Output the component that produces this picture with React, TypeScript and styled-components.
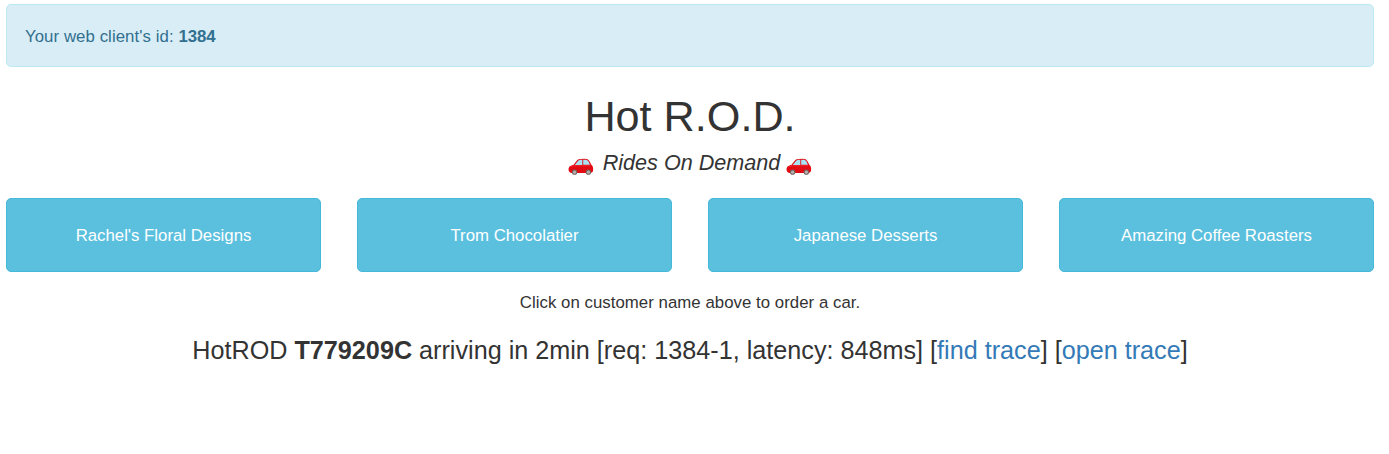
import React from 'react';
import styled, { createGlobalStyle } from 'styled-components';

const Global = createGlobalStyle`
  * { box-sizing: border-box; }
  body { margin: 0; background: #fff; color: #333; font: 16.8px/24px "Liberation Sans", Arial, sans-serif; overflow: hidden; }
`;
const Page = styled.main`padding: 4px 15px 0 6px;`;
const Alert = styled.div`
  height: 63px; padding: 20px 18px 18px; background: #d9edf7; border: 1px solid #bce8f1; border-radius: 5px; color: #31708f;
`;
const ClientLabel = styled.span`letter-spacing: 0.07px;`;
const Hero = styled.header`text-align: center;`;
const Title = styled.h1`margin: 24px 0 0; font-size: 43.2px; line-height: 50px; font-weight: 400;`;
const Tagline = styled.h4`
  margin: 8px 0 0; height: 28px; font-size: 21.6px; line-height: 28px; font-weight: 400;
  display: flex; justify-content: center; align-items: center;
`;
const Slogan = styled.em`margin: 0 5.5px 0 8.5px;`;
const Customers = styled.div`display: grid; grid-template-columns: repeat(4, 315px); justify-content: space-between; margin-top: 21px;`;
const CustomerButton = styled.button`
  height: 74px; padding: 1px 6px 0; border: 1px solid #46b8da; border-radius: 5px; background: #5bc0de; color: #fff; font: inherit;
`;
const Hint = styled.p`margin: 19px 0 0; text-align: center; letter-spacing: 0.04px;`;
const Trip = styled.div`margin-top: 18px; text-align: center; font-size: 25.2px; line-height: 34px; white-space: nowrap;`;
const Link = styled.a`color: #337ab7; text-decoration: none;`;
const CarSvg = styled.svg`display: block; width: 26px; height: 26px; margin-top: 4px;`;

const Car = () => (
  <CarSvg viewBox="0 0 26 26">
    <path d="M.6 18.6V16.2Q1 14.1 3.4 13.5L5.6 12.8 8.5 8.9Q9.5 7.1 12.3 6.9L17 6.8Q20 6.9 21.4 8.9L23.2 12.4 24.8 14.4Q25.4 16 24.9 19.6L23 21H3.2Q.8 20.6.6 18.6Z" fill="#e20b13" />
    <path d="M3.2 14.6Q5 13.8 8 13.7H22.4" fill="none" stroke="#f5292d" strokeWidth="0.8" />
    <path d="M6.8 13 10 9Q10.7 8 12.4 7.8H14.3V13ZM15.2 7.8H17.8Q19.3 8 20.4 9.2L22 12.8H15.2Z" fill="#a9e2f3" />
    <circle cx="6.6" cy="20.2" r="2.6" fill="#70645f" />
    <circle cx="6.6" cy="20.2" r="1.6" fill="#b5b0ad" />
    <circle cx="20.4" cy="20.2" r="2.6" fill="#70645f" />
    <circle cx="20.4" cy="20.2" r="1.6" fill="#b5b0ad" />
  </CarSvg>
);
const customers = ["Rachel's Floral Designs", 'Trom Chocolatier', 'Japanese Desserts', 'Amazing Coffee Roasters'];

export default function App() {
  return (
    <Page>
      <Global />
      <Alert><ClientLabel>Your web client's id: </ClientLabel><strong>1384</strong></Alert>
      <Hero>
        <Title>Hot R.O.D.</Title>
        <Tagline><Car /><Slogan>Rides On Demand</Slogan><Car /></Tagline>
      </Hero>
      <Customers>{customers.map((c) => <CustomerButton key={c}>{c}</CustomerButton>)}</Customers>
      <Hint>Click on customer name above to order a car.</Hint>
      <Trip>HotROD <b>T779209C</b> arriving in 2min [req: 1384-1, latency: 848ms] [<Link>find trace</Link>] [<Link>open trace</Link>]</Trip>
    </Page>
  );
}
